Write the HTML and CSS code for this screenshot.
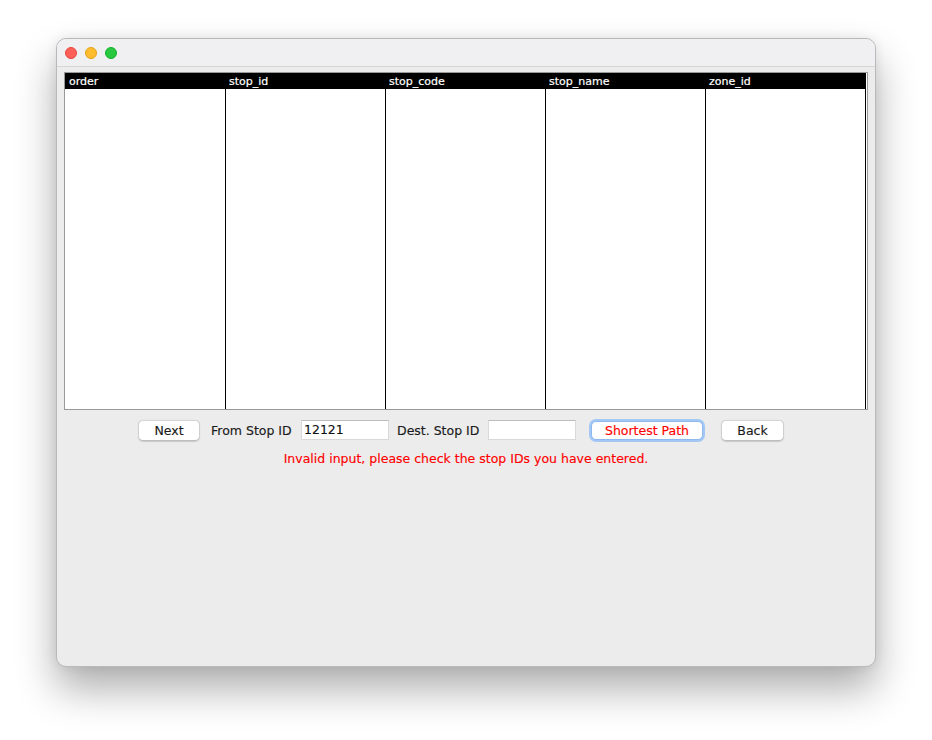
FILE: index.html
```html
<!DOCTYPE html>
<html>
<head>
<meta charset="utf-8">
<link rel="stylesheet" href="styles.css">
</head>
<body>
<div class="window">
  <div class="titlebar">
    <span class="light red"></span>
    <span class="light yellow"></span>
    <span class="light green"></span>
  </div>
  <div class="content">
    <div class="table">
      <div class="col"><div class="th">order</div></div>
      <div class="col"><div class="th">stop_id</div></div>
      <div class="col"><div class="th">stop_code</div></div>
      <div class="col"><div class="th">stop_name</div></div>
      <div class="col last"><div class="th">zone_id</div></div>
    </div>
    <div class="controls">
      <button class="btn btn-next">Next</button>
      <span class="label label-from">From Stop ID</span>
      <div class="field">12121</div>
      <span class="label label-dest">Dest. Stop ID</span>
      <div class="field"></div>
      <button class="btn btn-path">Shortest Path</button>
      <button class="btn btn-back">Back</button>
    </div>
    <div class="error">Invalid input, please check the stop IDs you have entered.</div>
  </div>
</div>
</body>
</html>
```
FILE: styles.css
```css
html, body {
  margin: 0;
  padding: 0;
  background: #ffffff;
  width: 932px;
  height: 740px;
  overflow: hidden;
}
body {
  padding: 38px 0 0 56px;
  box-sizing: border-box;
  font-family: "DejaVu Sans", "Liberation Sans", sans-serif;
}
.window {
  width: 820px;
  height: 629px;
  box-sizing: border-box;
  border: 1px solid #b9b9b9;
  border-radius: 10px;
  background: #ececec;
  box-shadow: 0 22px 40px rgba(0, 0, 0, 0.32), 0 0 12px rgba(0, 0, 0, 0.08);
  overflow: hidden;
}
.titlebar {
  height: 27px;
  background: #f0eff1;
  border-bottom: 1px solid #d6d6d6;
  display: flex;
  align-items: center;
  padding-left: 8px;
  gap: 8px;
}
.light {
  width: 12px;
  height: 12px;
  border-radius: 50%;
  box-sizing: border-box;
}
.red { background: #fe5f57; border: 1px solid #e2463f; }
.yellow { background: #febc2e; border: 1px solid #e1a116; }
.green { background: #28c840; border: 1px solid #14ae2a; }

.content {
  padding: 5px 0 0 7px;
}
.table {
  width: 804px;
  height: 338px;
  box-sizing: border-box;
  border: 1px solid #9a9a9a;
  background: #ffffff;
  display: grid;
  grid-template-columns: 160px 160px 160px 160px 161px;
  padding-right: 1px;
}
.col {
  border-left: 1px solid #000;
  background: #fff;
}
.col:first-child {
  border-left: none;
}
.col.last {
  border-right: 1px solid #000;
}
.th {
  height: 16px;
  background: #000;
  color: #fff;
  font-size: 11px;
  line-height: 17px;
  padding-left: 3px;
  -webkit-text-stroke: 0.2px #fff;
}
.col:first-child .th {
  padding-left: 4px;
}

.controls {
  display: flex;
  align-items: center;
  height: 22px;
  margin-top: 9px;
  padding-left: 74px;
  font-size: 12.5px;
  color: #1a1a1a;
}
.btn {
  font-family: "DejaVu Sans", "Liberation Sans", sans-serif;
  font-size: 12.5px;
  height: 21px;
  background: #ffffff;
  border: 1px solid #cfcfcf;
  border-top-color: #d6d6d6;
  border-bottom-color: #bdbdbd;
  border-radius: 5px;
  box-shadow: 0 0.5px 1px rgba(0, 0, 0, 0.15);
  padding: 0;
  color: #1a1a1a;
  line-height: 19px;
  -webkit-text-stroke: 0.15px currentColor;
}
.btn-next { width: 62px; }
.btn-back { width: 63px; margin-left: 18px; }
.btn-path {
  width: 112px;
  margin-left: 15px;
  color: #ff0000;
  border: 1px solid #8fb8ee;
  box-shadow: 0 0 0 2px #a4c8f5;
  height: 19px;
  line-height: 17px;
}
.label {
  white-space: nowrap;
  -webkit-text-stroke: 0.15px currentColor;
}
.label-from { margin-left: 11px; width: 90px; }
.label-dest { margin-left: 8px; width: 91px; }
.field {
  width: 88px;
  height: 20px;
  box-sizing: border-box;
  background: #fff;
  border: 1px solid #d9d9d9;
  border-top-color: #bdbdbd;
  font-size: 12.5px;
  line-height: 18px;
  padding-left: 2px;
  color: #111;
  -webkit-text-stroke: 0.15px currentColor;
}
.error {
  margin-top: 10px;
  text-align: center;
  color: #ff0000;
  font-size: 12.5px;
  padding-right: 7px;
  -webkit-text-stroke: 0.15px currentColor;
}
```
